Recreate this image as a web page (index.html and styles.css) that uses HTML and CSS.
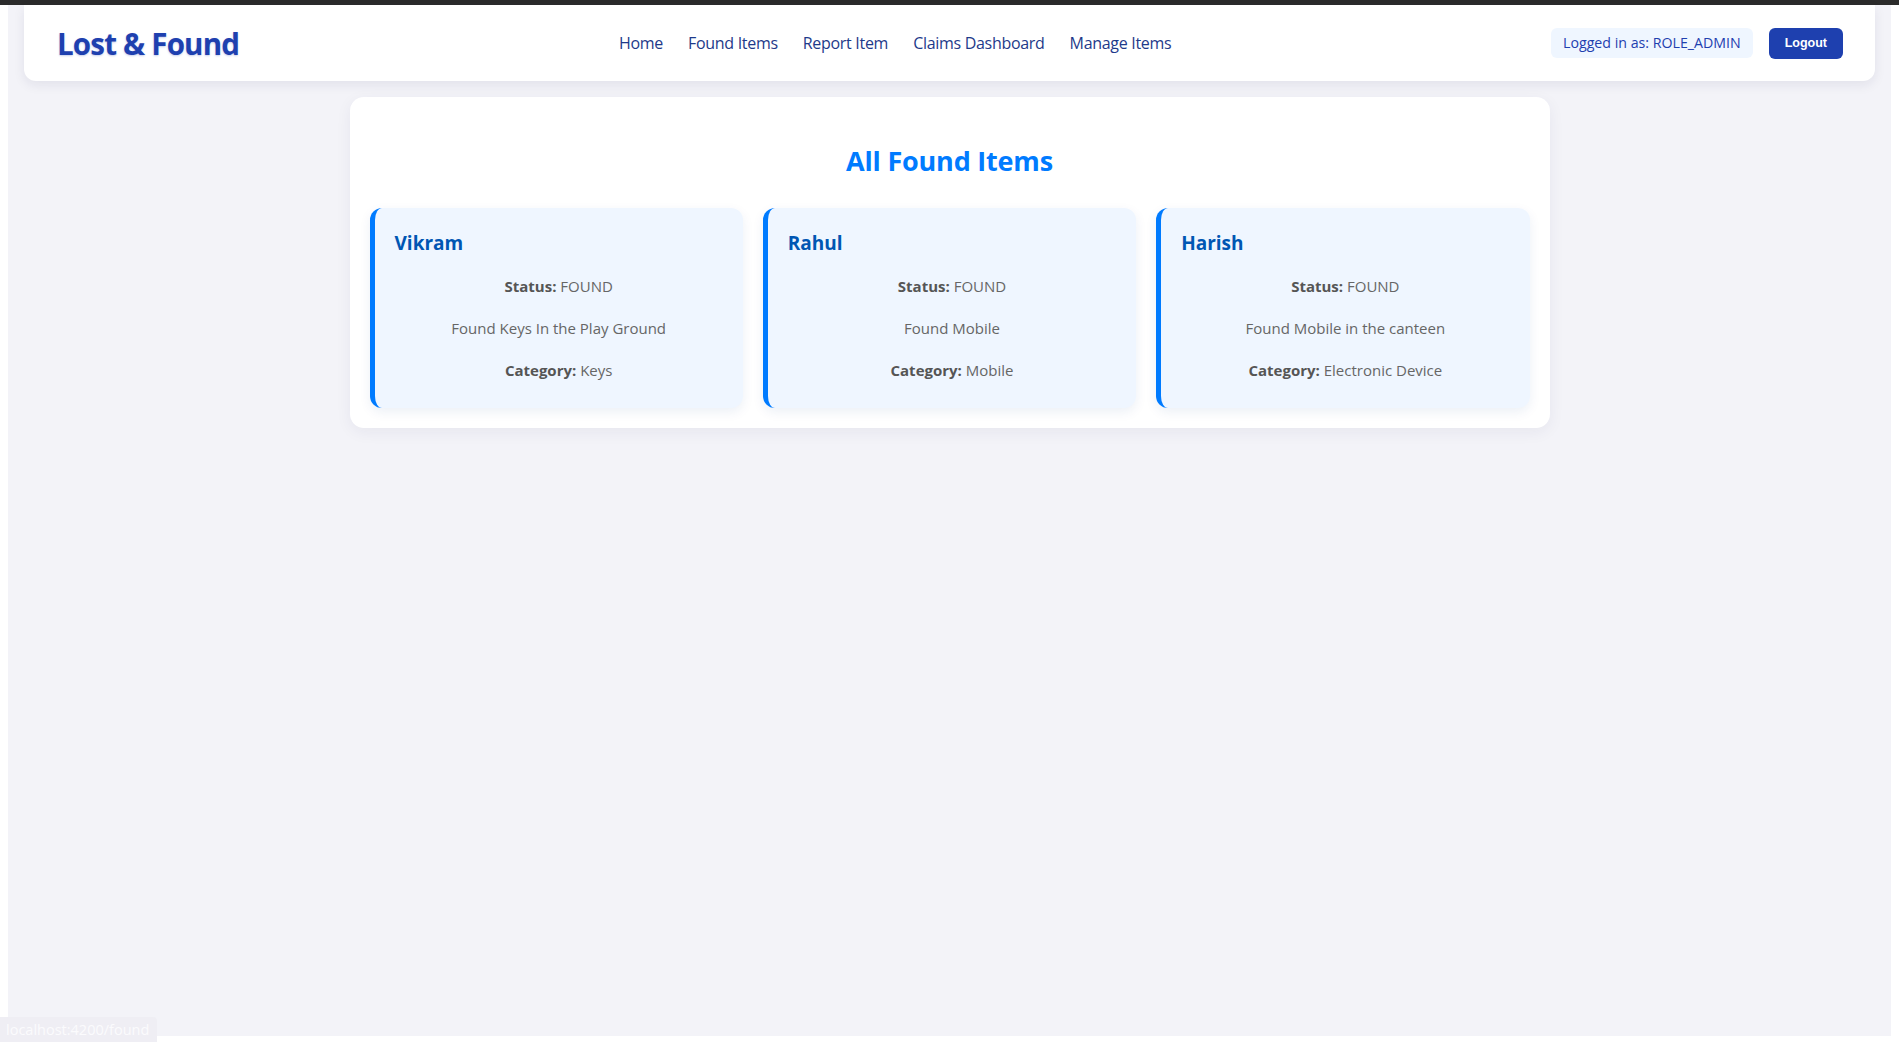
FILE: index.html
```html
<!DOCTYPE html>
<html lang="en">
<head>
<meta charset="utf-8">
<title>Lost &amp; Found</title>
<link rel="stylesheet" href="styles.css">
</head>
<body>
<div class="chrome-top"></div>
<div class="page">
  <header class="navbar">
    <div class="logo">Lost &amp; Found</div>
    <nav class="nav-links">
      <a href="#">Home</a>
      <a href="#">Found Items</a>
      <a href="#">Report Item</a>
      <a href="#">Claims Dashboard</a>
      <a href="#">Manage Items</a>
    </nav>
    <div class="user-area">
      <span class="role-badge">Logged in as: ROLE_ADMIN</span>
      <button class="logout-btn">Logout</button>
    </div>
  </header>

  <main class="panel">
    <h2 class="panel-title">All Found Items</h2>
    <div class="item-grid">
      <div class="item-card">
        <h3>Vikram</h3>
        <p><strong>Status:</strong> FOUND</p>
        <p>Found Keys In the Play Ground</p>
        <p><strong>Category:</strong> Keys</p>
      </div>
      <div class="item-card">
        <h3>Rahul</h3>
        <p><strong>Status:</strong> FOUND</p>
        <p>Found Mobile</p>
        <p><strong>Category:</strong> Mobile</p>
      </div>
      <div class="item-card">
        <h3>Harish</h3>
        <p><strong>Status:</strong> FOUND</p>
        <p>Found Mobile in the canteen</p>
        <p><strong>Category:</strong> Electronic Device</p>
      </div>
    </div>
  </main>
</div>
<div class="status-url">localhost:4200/found</div>
</body>
</html>
```

FILE: styles.css
```css
html, body {
  margin: 0;
  padding: 0;
  background: #ffffff;
}

body {
  font-family: "Open Sans", "Noto Sans", Arial, sans-serif;
  height: 1042px;
  overflow: hidden;
}

.chrome-top {
  height: 5px;
  background: #2b2b2b;
}

.page {
  margin: 0 8px;
  height: 1031px;
  background: #f3f3f8;
  padding: 0 16px;
  box-sizing: border-box;
}

.navbar {
  height: 76px;
  background: #ffffff;
  border-radius: 0 0 12px 12px;
  box-shadow: 0 4px 12px rgba(30, 30, 80, 0.08);
  display: flex;
  align-items: center;
  padding: 0 32px 0 33px;
}

.logo {
  width: 180px;
  white-space: nowrap;
  font-size: 29.5px;
  font-weight: 700;
  color: #1e40af;
  text-shadow: 0 1px 2px rgba(30, 64, 175, 0.25);
  letter-spacing: -0.8px;
}

.nav-links {
  display: flex;
  gap: 25px;
  margin-left: 382px;
}

.nav-links a {
  color: #1e3a8a;
  text-decoration: none;
  font-size: 16px;
  font-weight: 500;
  letter-spacing: -0.3px;
}

.user-area {
  margin-left: auto;
  display: flex;
  align-items: center;
  gap: 16px;
}

.role-badge {
  background: #eff6ff;
  color: #1e40af;
  font-size: 14.2px;
  font-weight: 500;
  padding: 0 12px;
  height: 30px;
  line-height: 30px;
  border-radius: 6px;
}

.logout-btn {
  background: #1e40af;
  color: #ffffff;
  border: none;
  border-radius: 6px;
  font-family: Arial, "Liberation Sans", sans-serif;
  font-weight: 700;
  font-size: 12.5px;
  height: 31px;
  padding: 0 16px;
}

.panel {
  max-width: 1200px;
  margin: 16px auto 0;
  background: #ffffff;
  border-radius: 14px;
  box-shadow: 0 4px 16px rgba(30, 30, 80, 0.06);
  padding: 20px;
  box-sizing: border-box;
}

.panel-title {
  margin: 24px 0 27px;
  text-align: center;
  color: #007bff;
  font-size: 27px;
  font-weight: 700;
  line-height: 40px;
  letter-spacing: -0.2px;
}

.item-grid {
  display: grid;
  grid-template-columns: repeat(3, 1fr);
  gap: 20px;
}

.item-card {
  background: #eff6ff;
  border-left: 5px solid #007bff;
  border-radius: 12px;
  box-shadow: 0 4px 12px rgba(0, 60, 140, 0.08);
  padding: 22px 20px 20px;
  height: 200px;
  box-sizing: border-box;
}

.item-card h3 {
  margin: 0 0 18px;
  color: #0056b3;
  font-size: 19px;
  font-weight: 700;
  line-height: 26px;
}

.item-card p {
  margin: 0 0 18px;
  text-align: center;
  color: #666666;
  font-size: 15px;
  line-height: 24px;
}

.item-card p strong {
  color: #555555;
}

.status-url {
  position: fixed;
  left: 0;
  bottom: 0;
  width: 157px;
  box-sizing: border-box;
  height: 25px;
  line-height: 25px;
  padding: 0 0 0 6px;
  background: #efeef4;
  color: #fbfbfd;
  font-size: 14.5px;
  border-top-right-radius: 4px;
  white-space: nowrap;
}
```
